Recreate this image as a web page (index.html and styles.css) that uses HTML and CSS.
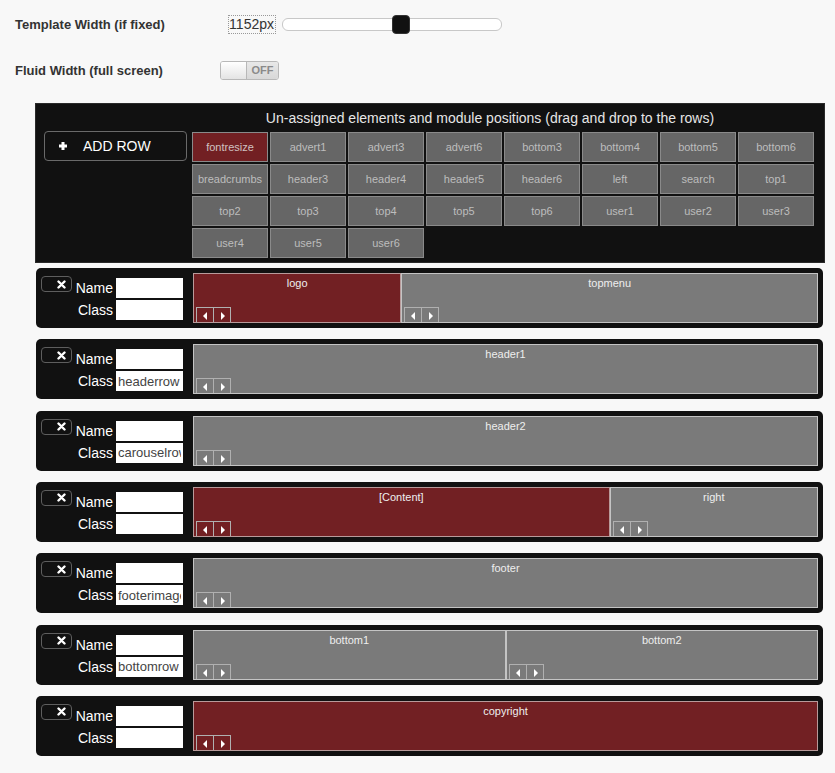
FILE: index.html
```html
<!DOCTYPE html>
<html>
<head>
<meta charset="utf-8">
<title>Layout builder</title>
<link rel="stylesheet" href="styles.css">
</head>
<body>
<div class="page">
  <div class="field">
    <label class="field-label">Template Width (if fixed)</label>
    <div class="field-control">
      <span class="width-value">1152px</span>
      <div class="slider"><span class="slider-handle"></span></div>
    </div>
  </div>
  <div class="field field-fluid">
    <label class="field-label">Fluid Width (full screen)</label>
    <div class="field-control">
      <div class="toggle"><span class="toggle-knob"></span><span class="toggle-off">OFF</span></div>
    </div>
  </div>

  <div class="unassigned">
    <div class="unassigned-title">Un-assigned elements and module positions (drag and drop to the rows)</div>
    <div class="unassigned-body">
      <button class="add-row"><svg class="plus" width="10" height="10" viewBox="0 0 10 10"><path d="M5 1v8M1 5h8" stroke="#fff" stroke-width="3"/></svg><span>ADD ROW</span></button>
      <div class="tiles">
        <div class="tile tile-red">fontresize</div>
        <div class="tile">advert1</div>
        <div class="tile">advert3</div>
        <div class="tile">advert6</div>
        <div class="tile">bottom3</div>
        <div class="tile">bottom4</div>
        <div class="tile">bottom5</div>
        <div class="tile">bottom6</div>
        <div class="tile">breadcrumbs</div>
        <div class="tile">header3</div>
        <div class="tile">header4</div>
        <div class="tile">header5</div>
        <div class="tile">header6</div>
        <div class="tile">left</div>
        <div class="tile">search</div>
        <div class="tile">top1</div>
        <div class="tile">top2</div>
        <div class="tile">top3</div>
        <div class="tile">top4</div>
        <div class="tile">top5</div>
        <div class="tile">top6</div>
        <div class="tile">user1</div>
        <div class="tile">user2</div>
        <div class="tile">user3</div>
        <div class="tile">user4</div>
        <div class="tile">user5</div>
        <div class="tile">user6</div>
      </div>
    </div>
  </div>

  <div class="rows">
    <div class="row">
      <div class="row-meta">
        <button class="remove"><svg width="9" height="9" viewBox="0 0 9 9"><path d="M1.5 1.5l6 6M7.5 1.5l-6 6" stroke="#fff" stroke-width="2.4" stroke-linecap="round"/></svg></button>
        <span class="meta-label">Name</span><input class="meta-input" type="text" value="">
        <span></span>
        <span class="meta-label">Class</span><input class="meta-input" type="text" value="">
      </div>
      <div class="modules">
        <div class="module module-red span-4"><span class="module-name">logo</span><span class="arrows"><span class="arrow arrow-left"></span><span class="arrow arrow-right"></span></span></div>
        <div class="module span-8"><span class="module-name">topmenu</span><span class="arrows"><span class="arrow arrow-left"></span><span class="arrow arrow-right"></span></span></div>
      </div>
    </div>

    <div class="row">
      <div class="row-meta">
        <button class="remove"><svg width="9" height="9" viewBox="0 0 9 9"><path d="M1.5 1.5l6 6M7.5 1.5l-6 6" stroke="#fff" stroke-width="2.4" stroke-linecap="round"/></svg></button>
        <span class="meta-label">Name</span><input class="meta-input" type="text" value="">
        <span></span>
        <span class="meta-label">Class</span><input class="meta-input" type="text" value="headerrow">
      </div>
      <div class="modules">
        <div class="module span-12"><span class="module-name">header1</span><span class="arrows"><span class="arrow arrow-left"></span><span class="arrow arrow-right"></span></span></div>
      </div>
    </div>

    <div class="row">
      <div class="row-meta">
        <button class="remove"><svg width="9" height="9" viewBox="0 0 9 9"><path d="M1.5 1.5l6 6M7.5 1.5l-6 6" stroke="#fff" stroke-width="2.4" stroke-linecap="round"/></svg></button>
        <span class="meta-label">Name</span><input class="meta-input" type="text" value="">
        <span></span>
        <span class="meta-label">Class</span><input class="meta-input" type="text" value="carouselrow">
      </div>
      <div class="modules">
        <div class="module span-12"><span class="module-name">header2</span><span class="arrows"><span class="arrow arrow-left"></span><span class="arrow arrow-right"></span></span></div>
      </div>
    </div>

    <div class="row">
      <div class="row-meta">
        <button class="remove"><svg width="9" height="9" viewBox="0 0 9 9"><path d="M1.5 1.5l6 6M7.5 1.5l-6 6" stroke="#fff" stroke-width="2.4" stroke-linecap="round"/></svg></button>
        <span class="meta-label">Name</span><input class="meta-input" type="text" value="">
        <span></span>
        <span class="meta-label">Class</span><input class="meta-input" type="text" value="">
      </div>
      <div class="modules">
        <div class="module module-red span-8"><span class="module-name">[Content]</span><span class="arrows"><span class="arrow arrow-left"></span><span class="arrow arrow-right"></span></span></div>
        <div class="module span-4"><span class="module-name">right</span><span class="arrows"><span class="arrow arrow-left"></span><span class="arrow arrow-right"></span></span></div>
      </div>
    </div>

    <div class="row">
      <div class="row-meta">
        <button class="remove"><svg width="9" height="9" viewBox="0 0 9 9"><path d="M1.5 1.5l6 6M7.5 1.5l-6 6" stroke="#fff" stroke-width="2.4" stroke-linecap="round"/></svg></button>
        <span class="meta-label">Name</span><input class="meta-input" type="text" value="">
        <span></span>
        <span class="meta-label">Class</span><input class="meta-input" type="text" value="footerimage">
      </div>
      <div class="modules">
        <div class="module span-12"><span class="module-name">footer</span><span class="arrows"><span class="arrow arrow-left"></span><span class="arrow arrow-right"></span></span></div>
      </div>
    </div>

    <div class="row">
      <div class="row-meta">
        <button class="remove"><svg width="9" height="9" viewBox="0 0 9 9"><path d="M1.5 1.5l6 6M7.5 1.5l-6 6" stroke="#fff" stroke-width="2.4" stroke-linecap="round"/></svg></button>
        <span class="meta-label">Name</span><input class="meta-input" type="text" value="">
        <span></span>
        <span class="meta-label">Class</span><input class="meta-input" type="text" value="bottomrow">
      </div>
      <div class="modules">
        <div class="module span-6"><span class="module-name">bottom1</span><span class="arrows"><span class="arrow arrow-left"></span><span class="arrow arrow-right"></span></span></div>
        <div class="module span-6"><span class="module-name">bottom2</span><span class="arrows"><span class="arrow arrow-left"></span><span class="arrow arrow-right"></span></span></div>
      </div>
    </div>

    <div class="row">
      <div class="row-meta">
        <button class="remove"><svg width="9" height="9" viewBox="0 0 9 9"><path d="M1.5 1.5l6 6M7.5 1.5l-6 6" stroke="#fff" stroke-width="2.4" stroke-linecap="round"/></svg></button>
        <span class="meta-label">Name</span><input class="meta-input" type="text" value="">
        <span></span>
        <span class="meta-label">Class</span><input class="meta-input" type="text" value="">
      </div>
      <div class="modules">
        <div class="module module-red span-12"><span class="module-name">copyright</span><span class="arrows"><span class="arrow arrow-left"></span><span class="arrow arrow-right"></span></span></div>
      </div>
    </div>
  </div>
</div>
</body>
</html>
```

FILE: styles.css
```css
* { box-sizing: border-box; }

html, body {
  margin: 0;
  padding: 0;
  background: #f8f8f8;
  font-family: "Liberation Sans", Arial, sans-serif;
}

.page {
  padding-top: 14px;
}

.field {
  display: flex;
  align-items: center;
  height: 20px;
  padding-left: 15px;
}

.field-fluid {
  margin-top: 26px;
}

.field-label {
  width: 205px;
  font-size: 13px;
  font-weight: bold;
  color: #333;
}

.field-control {
  display: flex;
  align-items: center;
}

.width-value {
  margin-left: 8px;
  width: 48px;
  height: 19px;
  border: 1px dotted #999;
  font-size: 14px;
  line-height: 17px;
  color: #333;
  text-align: right;
  padding-right: 1px;
}

.slider {
  position: relative;
  margin-left: 6px;
  width: 220px;
  height: 13px;
  background: #fff;
  border: 1px solid #c8c8c8;
  border-radius: 6px;
}

.slider-handle {
  position: absolute;
  left: 109px;
  top: -4px;
  width: 18px;
  height: 19px;
  background: #111;
  border: 1px solid #333;
  border-radius: 4px;
}

.toggle {
  display: flex;
  width: 59px;
  height: 19px;
  border: 1px solid #b8b8b8;
  border-radius: 3px;
  overflow: hidden;
}

.toggle-knob {
  width: 26px;
  background: linear-gradient(#ffffff, #e4e4e4);
  border-right: 1px solid #b8b8b8;
}

.toggle-off {
  flex: 1;
  background: linear-gradient(#e8e8e8, #d8d8d8);
  font-size: 11px;
  font-weight: bold;
  color: #8a8a8a;
  line-height: 17px;
  text-align: center;
}

/* unassigned panel */
.unassigned {
  margin: 23px 0 0 35px;
  width: 790px;
  background: #111;
  border: 1px solid #2a2a2a;
  padding-bottom: 4px;
}

.unassigned-title {
  height: 28px;
  padding: 6px 0 0 120px;
  text-align: center;
  font-size: 14px;
  color: #e6e6e6;
}

.unassigned-body {
  display: flex;
  align-items: flex-start;
}

.add-row {
  display: flex;
  align-items: center;
  margin: -1px 0 0 8px;
  width: 143px;
  height: 30px;
  background: #111;
  border: 1px solid #6a6a6a;
  border-radius: 4px;
  color: #fff;
  font-family: "Liberation Sans", Arial, sans-serif;
  font-size: 14px;
  padding: 0 0 0 13px;
}

.plus { margin-right: 15px; }

.tiles {
  margin-left: 5px;
  display: grid;
  grid-template-columns: repeat(8, 76px);
  grid-auto-rows: 30px;
  gap: 2px;
}

.tile {
  background: #666;
  border: 1px solid #8a8a8a;
  color: #bdbdbd;
  font-size: 11px;
  display: flex;
  align-items: center;
  justify-content: center;
}

.tile-red {
  background: #722023;
  color: #d0c0c0;
}

/* rows */
.rows {
  margin: 5px 0 0 36px;
  width: 787px;
}

.row {
  display: flex;
  height: 60px;
  margin-bottom: 11.33px;
  padding: 5px 5px 5px 5px;
  background: #111;
  border-radius: 5px;
}

.row-meta {
  display: grid;
  grid-template-columns: 31px 38px 67px;
  grid-template-rows: 20px 20px;
  column-gap: 3px;
  row-gap: 2px;
  padding-top: 5px;
  width: 152px;
  align-items: center;
}

.remove {
  align-self: start;
  margin-top: -2px;
  width: 31px;
  height: 16px;
  padding: 0 0 0 10px;
  background: #111;
  border: 1px solid #5e5e5e;
  border-radius: 4px;
  display: flex;
  align-items: center;
  justify-content: center;
}

.meta-label {
  font-size: 14px;
  color: #fff;
  text-align: right;
}

.meta-input {
  width: 67px;
  height: 20px;
  border: none;
  padding: 0 2px;
  margin: 0;
  background: #fff;
  font-family: "Liberation Sans", Arial, sans-serif;
  font-size: 13px;
  color: #444;
  overflow: hidden;
}

.modules {
  flex: 1;
  display: flex;
  height: 50px;
}

.module {
  position: relative;
  height: 50px;
  background: #7a7a7a;
  border: 1px solid #c4c4c4;
  text-align: center;
}

.module-red {
  background: #722023;
  border-color: #b89a9a;
}

.span-4 { width: 33.333%; }
.span-6 { width: 50%; }
.span-8 { width: 66.667%; }
.span-12 { width: 100%; }

.module-name {
  display: block;
  padding-top: 3px;
  font-size: 11px;
  color: #eee;
}

.arrows {
  position: absolute;
  left: 2px;
  bottom: 0;
  display: flex;
}

.arrow {
  position: relative;
  width: 18px;
  height: 15px;
  border: 1px solid #b0b0b0;
  border-bottom: none;
}

.arrow + .arrow { margin-left: -1px; }

.arrow::after {
  content: "";
  position: absolute;
  top: 4px;
  width: 0;
  height: 0;
  border-top: 4px solid transparent;
  border-bottom: 4px solid transparent;
}

.arrow-left::after {
  left: 6px;
  border-right: 4px solid #fff;
}

.arrow-right::after {
  left: 7px;
  border-left: 4px solid #fff;
}
```
